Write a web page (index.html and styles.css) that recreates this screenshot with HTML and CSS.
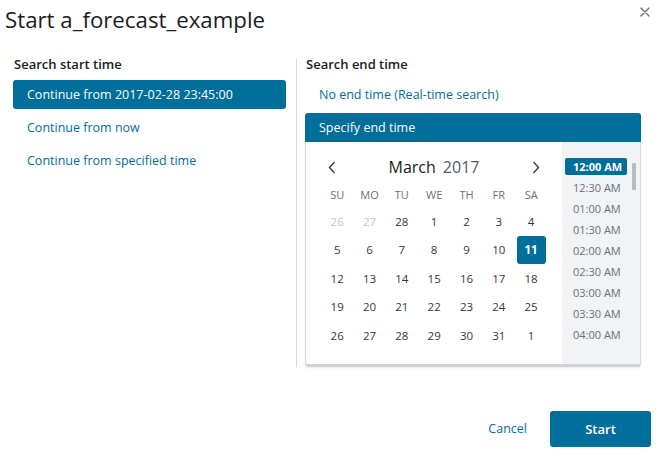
FILE: index.html
```html
<!DOCTYPE html>
<html lang="en">
<head>
<meta charset="utf-8">
<title>Start a_forecast_example</title>
<link rel="stylesheet" href="styles.css">
</head>
<body>
<div class="modal">
  <div class="modal-header">
    <h1 class="title">Start a_forecast_example</h1>
    <button class="close" aria-label="Close">
      <svg width="10" height="10" viewBox="0 0 10 10"><path d="M1 1L9 9M9 1L1 9" stroke="#69707d" stroke-width="1.4" stroke-linecap="round"/></svg>
    </button>
  </div>
  <div class="modal-body">
    <div class="col col-left">
      <div class="col-heading">Search start time</div>
      <div class="options">
        <div class="option option-selected">Continue from 2017-02-28 23:45:00</div>
        <div class="option">Continue from now</div>
        <div class="option">Continue from specified time</div>
      </div>
    </div>
    <div class="divider"></div>
    <div class="col col-right">
      <div class="col-heading">Search end time</div>
      <div class="options">
        <div class="option">No end time (Real-time search)</div>
        <div class="option option-header">Specify end time</div>
      </div>
      <div class="picker">
        <div class="calendar">
          <div class="cal-nav">
            <span class="nav-btn"><svg width="8" height="13" viewBox="0 0 8 13"><path d="M6.5 1L1.5 6.5L6.5 12" fill="none" stroke="#343741" stroke-width="1.3"/></svg></span>
            <span class="month"><span class="month-name">March</span><span class="year">2017</span></span>
            <span class="nav-btn"><svg width="8" height="13" viewBox="0 0 8 13"><path d="M1.5 1L6.5 6.5L1.5 12" fill="none" stroke="#343741" stroke-width="1.3"/></svg></span>
          </div>
          <div class="cal-grid weekdays">
            <span>SU</span><span>MO</span><span>TU</span><span>WE</span><span>TH</span><span>FR</span><span>SA</span>
          </div>
          <div class="cal-grid days">
            <span class="muted">26</span><span class="muted">27</span><span>28</span><span>1</span><span>2</span><span>3</span><span>4</span>
            <span>5</span><span>6</span><span>7</span><span>8</span><span>9</span><span>10</span><span class="sel"><b>11</b></span>
            <span>12</span><span>13</span><span>14</span><span>15</span><span>16</span><span>17</span><span>18</span>
            <span>19</span><span>20</span><span>21</span><span>22</span><span>23</span><span>24</span><span>25</span>
            <span>26</span><span>27</span><span>28</span><span>29</span><span>30</span><span>31</span><span>1</span>
          </div>
        </div>
        <div class="times">
          <div class="time time-selected">12:00 AM</div>
          <div class="time">12:30 AM</div>
          <div class="time">01:00 AM</div>
          <div class="time">01:30 AM</div>
          <div class="time">02:00 AM</div>
          <div class="time">02:30 AM</div>
          <div class="time">03:00 AM</div>
          <div class="time">03:30 AM</div>
          <div class="time">04:00 AM</div>
          <div class="scroll-thumb"></div>
        </div>
      </div>
    </div>
  </div>
  <div class="modal-footer">
    <button class="btn-cancel">Cancel</button>
    <button class="btn-start">Start</button>
  </div>
</div>
</body>
</html>
```

FILE: styles.css
```css
* { box-sizing: border-box; }
html, body { margin: 0; padding: 0; background: #fff; }
body {
  font-family: "Open Sans", "Noto Sans", "DejaVu Sans", sans-serif;
  color: #343741;
  width: 662px;
  height: 458px;
  overflow: hidden;
}
button { font-family: inherit; border: 0; background: none; padding: 0; cursor: pointer; }

.modal-header {
  display: flex;
  justify-content: space-between;
  align-items: flex-start;
  padding: 5px 12px 0 5px;
}
.title {
  margin: 0;
  font-size: 22.25px;
  line-height: 30px;
  font-weight: 400;
  color: #1a1c21;
}
.close {
  margin-top: 2px;
  width: 10px;
  height: 10px;
  display: flex;
}

.modal-body {
  display: flex;
  margin-top: 21px;
  padding-left: 13px;
}
.col-left { width: 273px; }
.divider {
  width: 1px;
  background: #d3dae6;
  margin: 3px 8px 0 10px;
}
.col-right { width: 336px; }

.col-heading {
  font-size: 13px;
  line-height: 17px;
  font-weight: 600;
  color: #1a1c21;
  padding-left: 1px;
  margin-bottom: 7px;
}
.options {
  display: flex;
  flex-direction: column;
  gap: 4px;
}
.option {
  height: 29px;
  line-height: 29px;
  padding-left: 14px;
  font-size: 12.5px;
  color: #006e9b;
  border-radius: 3px;
}
.option-selected {
  background: #006e9b;
  color: #fff;
}
.option-header {
  background: #006e9b;
  color: #fff;
  border-radius: 3px 3px 0 0;
}

.picker {
  display: flex;
  border: 1px solid #d3dae6;
  border-top: 0;
  border-bottom: 3px solid #cfd3d8;
  border-radius: 0 0 3px 3px;
  box-shadow: 0 1px 2px rgba(0,0,0,0.08);
}
.calendar {
  width: 256px;
  padding: 10px 15px 14px 15px;
}
.cal-nav {
  height: 30px;
  display: flex;
  align-items: center;
  justify-content: space-between;
  padding: 0 7px 0 7px;
}
.nav-btn { display: flex; width: 8px; height: 13px; }
.month { font-size: 16px; color: #343741; display: flex; gap: 7px; }
.month-name { color: #1a1c21; font-weight: 500; }
.year { color: #535966; font-weight: 500; }

.cal-grid {
  display: grid;
  grid-template-columns: repeat(7, 32.33px);
}
.cal-grid span {
  display: flex;
  align-items: center;
  justify-content: center;
}
.weekdays span {
  height: 25px;
  font-size: 11px;
  color: #69707d;
}
.days span {
  height: 28.5px;
  font-size: 11.5px;
  color: #343741;
}
.days .muted { color: #c2c4c9; }
.days .sel b {
  display: flex;
  align-items: center;
  justify-content: center;
  width: 29px;
  height: 28px;
  background: #006e9b;
  color: #fff;
  border-radius: 3px;
  font-weight: 700;
}

.times {
  position: relative;
  flex: 1;
  background: #f1f3f4;
  padding: 16px 0 0 3px;
}
.time {
  width: 62px;
  height: 17px;
  line-height: 17px;
  margin-bottom: 4px;
  padding-left: 8px;
  font-size: 11px;
  color: #69707d;
  border-radius: 2px;
  white-space: nowrap;
}
.time-selected {
  background: #006e9b;
  color: #fff;
  font-weight: 700;
}
.scroll-thumb {
  position: absolute;
  left: 70px;
  top: 21px;
  width: 4px;
  height: 27px;
  background: #b7bcc2;
  border-radius: 1px;
}

.modal-footer {
  display: flex;
  justify-content: flex-end;
  align-items: center;
  gap: 23px;
  margin-top: 44px;
  padding-right: 11px;
}
.btn-cancel {
  font-size: 12.5px;
  color: #006e9b;
}
.btn-start {
  width: 101px;
  height: 36px;
  background: #006e9b;
  color: #fff;
  font-size: 13px;
  font-weight: 600;
  border-radius: 3px;
}
```
